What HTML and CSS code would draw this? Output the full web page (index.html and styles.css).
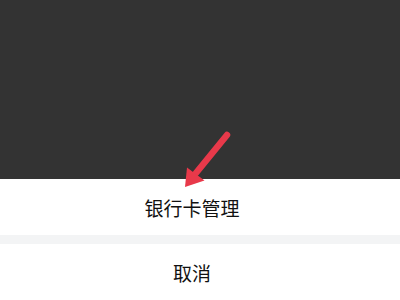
FILE: index.html
```html
<!DOCTYPE html>
<html lang="zh">
<head>
<meta charset="utf-8">
<link rel="stylesheet" href="styles.css">
</head>
<body>
<div class="page">
  <div class="mask"></div>
  <div class="sheet">
    <div class="item">银行卡管理</div>
    <div class="gap"></div>
    <div class="item cancel">取消</div>
  </div>
  <svg class="arrow" width="400" height="300" viewBox="0 0 400 300">
    <line x1="227" y1="135" x2="196" y2="173" stroke="#e8394a" stroke-width="6.5" stroke-linecap="round"/>
    <polygon points="185,187 187,167.5 204.5,180.5" fill="#e8394a"/>
  </svg>
</div>
</body>
</html>
```
FILE: styles.css
```css
html, body {
  margin: 0;
  padding: 0;
}
body {
  width: 400px;
  height: 300px;
  overflow: hidden;
  font-family: "Noto Sans CJK SC", "Noto Sans", sans-serif;
}
.page {
  position: relative;
  width: 400px;
  height: 300px;
  display: flex;
  flex-direction: column;
}
.mask {
  height: 179px;
  background: #333333;
}
.sheet {
  flex: 1;
  display: flex;
  flex-direction: column;
  background: #ffffff;
}
.item {
  height: 56px;
  display: flex;
  align-items: center;
  justify-content: center;
  padding-right: 16px;
  font-size: 19px;
  color: #111111;
  background: #ffffff;
}
.gap {
  height: 9px;
  background: #f3f4f5;
}
.cancel {
  flex: 1;
}
.arrow {
  position: absolute;
  left: 0;
  top: 0;
}
```
